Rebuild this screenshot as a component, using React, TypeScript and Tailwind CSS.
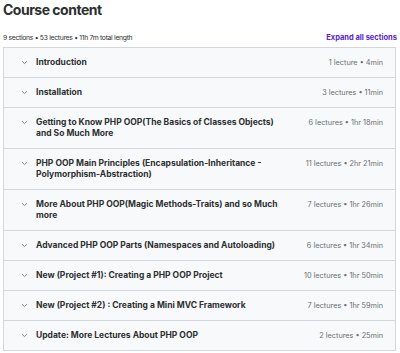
import React from "react";

const sections: { title: string; meta: string }[] = [
  { title: "Introduction", meta: "1 lecture • 4min" },
  { title: "Installation", meta: "3 lectures • 11min" },
  { title: "Getting to Know PHP OOP(The Basics of Classes Objects) and So Much More", meta: "6 lectures • 1hr 18min" },
  { title: "PHP OOP Main Principles (Encapsulation-Inheritance - Polymorphism-Abstraction)", meta: "11 lectures • 2hr 21min" },
  { title: "More About PHP OOP(Magic Methods-Traits) and so Much more", meta: "7 lectures • 1hr 26min" },
  { title: "Advanced PHP OOP Parts (Namespaces and Autoloading)", meta: "6 lectures • 1hr 34min" },
  { title: "New (Project #1): Creating a PHP OOP Project", meta: "10 lectures • 1hr 50min" },
  { title: "New (Project #2) : Creating a Mini MVC Framework", meta: "7 lectures • 1hr 59min" },
  { title: "Update: More Lectures About PHP OOP", meta: "2 lectures • 25min" },
];

function Chevron() {
  return (
    <svg width="7" height="5" viewBox="0 0 7 5" className="shrink-0 mt-[3px]">
      <path d="M1 1.2 L3.5 3.6 L6 1.2" fill="none" stroke="#6a6f73" strokeWidth="0.8" />
    </svg>
  );
}

export default function App() {
  return (
    <div className="w-[400px] h-[353px] bg-white text-[#2d2f31] overflow-hidden" style={{ fontFamily: "Inter, 'Noto Sans', sans-serif" }}>
      <h2 className="pl-[3px] pt-[1px] text-[14px] font-bold leading-[18px] tracking-[-0.5px] text-[#2d2f31]">Course content</h2>
      <div className="flex items-center justify-between pl-[3px] pr-[3px] mt-[14px] h-[10px]">
        <span className="text-[6.8px] leading-[10px] tracking-[-0.3px] text-[#2d2f31]">9 sections • 53 lectures • 11h 7m total length</span>
        <span className="text-[7.5px] font-bold leading-[10px] text-[#5624d0]">Expand all sections</span>
      </div>
      <div className="mt-[4px] ml-[3px] mr-[4px] border border-[#d1d7dc] bg-[#f7f9fa]">
        {sections.map((s, i) => (
          <div key={i} className={`flex items-start pl-[17px] pr-[12px] py-[9px] ${i < sections.length - 1 ? "border-b border-[#d1d7dc]" : ""}`}>
            <Chevron />
            <div className="ml-[8px] w-[252px] text-[8.5px] font-bold leading-[11px] text-[#2d2f31]">{s.title}</div>
            <div className="ml-auto text-[7.3px] leading-[11px] text-[#6a6f73] whitespace-nowrap">{s.meta}</div>
          </div>
        ))}
      </div>
    </div>
  );
}
